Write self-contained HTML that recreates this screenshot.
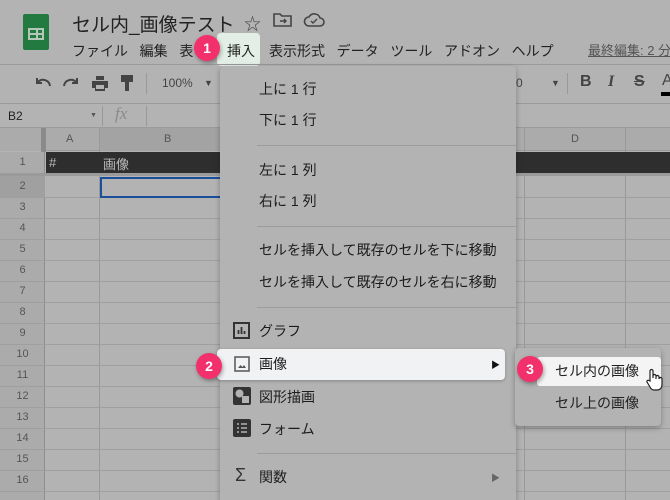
<!DOCTYPE html>
<html><head><meta charset="utf-8"><style>
*{margin:0;padding:0;box-sizing:border-box}
html,body{width:670px;height:500px;overflow:hidden}
body{background:#b3b3b3;font-family:"Liberation Sans","Noto Sans CJK JP",sans-serif;position:relative;color:#1a1a1a}
.a{position:absolute;white-space:nowrap}
.hl{border-top:1px solid #9a9a9a}
.badge{position:absolute;width:26px;height:26px;border-radius:50%;background:#f2306b;color:#fff;font-weight:bold;font-size:14px;text-align:center;line-height:26px;box-shadow:1px 2px 4px rgba(0,0,0,.35)}
.mi{position:absolute;left:259px;font-size:14px;color:#1c1c1c}
.sep{position:absolute;left:257px;width:259px;height:1px;background:#9c9c9c}
.rn{position:absolute;left:0;width:45px;text-align:center;font-size:11px;color:#555}
</style></head><body>
<div class="a" style="left:23px;top:14px;width:26px;height:36px;background:#237a40;border-radius:2px"></div>
<div class="a" style="left:28px;top:28px;width:16px;height:12px;border:2px solid #b5c7b8;background:linear-gradient(#b5c7b8,#b5c7b8) 6px 0/2px 100% no-repeat,linear-gradient(#b5c7b8,#b5c7b8) 0 3px/100% 2px no-repeat"></div>
<div class="a" style="left:72px;top:10px;font-size:19px;color:#222">セル内_画像テスト</div>
<div class="a" style="left:244px;top:10px;font-size:17px;color:#444">☆</div>
<svg class="a" style="left:273px;top:12px" width="20" height="16" viewBox="0 0 20 16"><path d="M1 2h6l2 2h9v10H1z" fill="none" stroke="#444" stroke-width="1.6"/><path d="M7 9h6M11 7l2 2-2 2" fill="none" stroke="#444" stroke-width="1.4"/></svg>
<svg class="a" style="left:303px;top:12px" width="22" height="16" viewBox="0 0 22 16"><path d="M6 14h11a4 4 0 0 0 0-8 6 6 0 0 0-11-1 4.5 4.5 0 0 0 0 9z" fill="none" stroke="#444" stroke-width="1.6"/><path d="M8 9l2 2 4-4" fill="none" stroke="#444" stroke-width="1.4"/></svg>
<div class="a" style="left:72px;top:41px;font-size:14px;color:#222">ファイル&nbsp;&nbsp;&nbsp;編集&nbsp;&nbsp;&nbsp;表</div>
<div class="a" style="left:217px;top:33px;width:43px;height:33px;background:#e3efe6;border-radius:4px"></div>
<div class="a" style="left:227px;top:41px;font-size:14px;color:#222">挿入</div>
<div class="a" style="left:269px;top:41px;font-size:14px;color:#222">表示形式&nbsp;&nbsp;&nbsp;データ&nbsp;&nbsp;&nbsp;ツール&nbsp;&nbsp;&nbsp;アドオン&nbsp;&nbsp;&nbsp;ヘルプ</div>
<div class="a" style="left:588px;top:40px;font-size:13px;color:#555;text-decoration:underline">最終編集: 2 分</div>
<div class="a hl" style="left:0;top:64px;width:670px"></div>
<svg class="a" style="left:34px;top:76px" width="18" height="12" viewBox="0 0 18 12"><path d="M16 10a7 7 0 0 0-12-4M3 2v5h5" fill="none" stroke="#444" stroke-width="2"/></svg>
<svg class="a" style="left:62px;top:76px" width="18" height="12" viewBox="0 0 18 12"><path d="M2 10a7 7 0 0 1 12-4M15 2v5h-5" fill="none" stroke="#444" stroke-width="2"/></svg>
<svg class="a" style="left:91px;top:74px" width="18" height="18" viewBox="0 0 18 18"><path d="M5 2h8v4H5z M1 7h16v7h-3v3H4v-3H1z" fill="#444"/><rect x="5" y="11" width="8" height="4" fill="#b3b3b3"/></svg>
<div class="a" style="left:121px;top:75px;width:12px;height:7px;background:#444"></div>
<div class="a" style="left:125px;top:82px;width:4px;height:9px;background:#444"></div>
<div class="a" style="left:146px;top:73px;height:21px;border-left:1px solid #999"></div>
<div class="a" style="left:162px;top:76px;font-size:12px;color:#444">100%</div>
<div class="a" style="left:204px;top:78px;font-size:9px;color:#444">▼</div>
<div class="a" style="left:516px;top:76px;font-size:12px;color:#444">0</div>
<div class="a" style="left:551px;top:78px;font-size:9px;color:#444">▼</div>
<div class="a" style="left:567px;top:73px;height:21px;border-left:1px solid #999"></div>
<div class="a" style="left:580px;top:73px;font-size:16px;font-weight:bold;color:#444">B</div>
<div class="a" style="left:608px;top:73px;font-size:16px;font-style:italic;font-family:'Liberation Serif',serif;font-weight:bold;color:#444">I</div>
<div class="a" style="left:634px;top:73px;font-size:16px;font-weight:bold;color:#444;text-decoration:line-through">S</div>
<div class="a" style="left:662px;top:72px;font-size:16px;color:#444">A</div>
<div class="a" style="left:661px;top:92px;width:9px;height:4px;background:#000"></div>
<div class="a hl" style="left:0;top:103px;width:670px"></div>
<div class="a" style="left:8px;top:109px;font-size:12px;color:#222">B2</div>
<div class="a" style="left:90px;top:112px;font-size:7px;color:#555">▼</div>
<div class="a" style="left:102px;top:106px;height:20px;border-left:1px solid #999"></div>
<div class="a" style="left:115px;top:104px;font-size:17px;font-style:italic;font-family:'Liberation Serif',serif;color:#8a8a8a">fx</div>
<div class="a" style="left:146px;top:106px;height:20px;border-left:1px solid #999"></div>
<div class="a hl" style="left:0;top:127px;width:670px"></div>
<div class="a" style="left:0;top:128px;width:670px;height:23px;background:#ababab;border-bottom:1px solid #999"></div>
<div class="a" style="left:41px;top:128px;width:5px;height:24px;background:#8a8a8a"></div>
<div class="a" style="left:0;top:128px;width:41px;height:23px;background:#ababab"></div>
<div class="a" style="left:100px;top:128px;width:120px;height:23px;background:#a3a3a3"></div>
<div class="a" style="left:66px;top:133px;font-size:11px;color:#555">A</div>
<div class="a" style="left:164px;top:133px;font-size:11px;color:#555">B</div>
<div class="a" style="left:571px;top:133px;font-size:11px;color:#555">D</div>
<div class="a" style="left:99px;top:128px;height:372px;border-left:1px solid #999"></div>
<div class="a" style="left:524px;top:128px;height:372px;border-left:1px solid #999"></div>
<div class="a" style="left:625px;top:128px;height:372px;border-left:1px solid #999"></div>
<div class="a" style="left:0;top:152px;width:45px;height:348px;background:#ababab;border-right:1px solid #8e8e8e"></div>
<div class="a" style="left:46px;top:152px;width:624px;height:21px;background:#2e2e2e"></div>
<div class="a" style="left:49px;top:155px;font-size:13px;color:#bbb">#</div>
<div class="a" style="left:103px;top:154px;font-size:13px;color:#bbb">画像</div>
<div class="a" style="left:0;top:173px;width:670px;height:3px;background:#9a9a9a"></div>
<div class="a" style="left:0;top:176px;width:45px;height:21px;background:#a0a0a0"></div>
<div class="rn" style="top:156px">1</div>
<div class="rn" style="top:180px">2</div>
<div class="rn" style="top:201px">3</div><div class="rn" style="top:222px">4</div><div class="rn" style="top:243px">5</div><div class="rn" style="top:264px">6</div><div class="rn" style="top:285px">7</div><div class="rn" style="top:306px">8</div><div class="rn" style="top:327px">9</div><div class="rn" style="top:348px">10</div><div class="rn" style="top:369px">11</div><div class="rn" style="top:390px">12</div><div class="rn" style="top:411px">13</div><div class="rn" style="top:432px">14</div><div class="rn" style="top:453px">15</div><div class="rn" style="top:474px">16</div>
<div class="a" style="left:0;top:197px;width:670px;height:304px;background:repeating-linear-gradient(#9f9f9f 0 1px,transparent 1px 21px)"></div>
<div class="a" style="left:100px;top:177px;width:125px;height:21px;border:2px solid #1b4f9c"></div>
<div class="a" style="left:220px;top:66px;width:296px;height:440px;background:#b3b3b3;box-shadow:0 2px 6px rgba(0,0,0,.3);border-radius:4px"></div>
<div class="mi" style="top:79px">上に 1 行</div>
<div class="mi" style="top:110px">下に 1 行</div>
<div class="sep" style="top:145px"></div>
<div class="mi" style="top:160px">左に 1 列</div>
<div class="mi" style="top:191px">右に 1 列</div>
<div class="sep" style="top:226px"></div>
<div class="mi" style="top:240px">セルを挿入して既存のセルを下に移動</div>
<div class="mi" style="top:272px">セルを挿入して既存のセルを右に移動</div>
<div class="sep" style="top:307px"></div>
<svg class="a" style="left:233px;top:322px" width="17" height="17" viewBox="0 0 17 17"><rect x="1" y="1" width="15" height="15" fill="none" stroke="#333" stroke-width="2"/><path d="M5.5 12V8M8.5 12V5M11.5 12V9" stroke="#333" stroke-width="1.8"/></svg>
<div class="mi" style="top:321px">グラフ</div>
<div class="a" style="left:217px;top:349px;width:288px;height:31px;background:#f1f2f4;border-radius:4px;box-shadow:0 1px 3px rgba(0,0,0,.25)"></div>
<svg class="a" style="left:234px;top:356px" width="16" height="16" viewBox="0 0 16 16"><rect x="1" y="1" width="14" height="14" fill="none" stroke="#555" stroke-width="1.5"/><path d="M4 12l2.5-3 2 2 1.5-2 2 3z" fill="#555"/></svg>
<div class="mi" style="top:354px">画像</div>
<div class="a" style="left:491px;top:358px;font-size:9px;color:#111">▶</div>
<svg class="a" style="left:233px;top:387px" width="18" height="18" viewBox="0 0 18 18"><rect width="18" height="18" rx="2" fill="#333"/><circle cx="6.5" cy="6.5" r="4" fill="#b3b3b3"/><rect x="9" y="9" width="7" height="7" fill="#b3b3b3"/></svg>
<div class="mi" style="top:387px">図形描画</div>
<svg class="a" style="left:233px;top:419px" width="18" height="18" viewBox="0 0 18 18"><rect width="18" height="18" rx="2" fill="#333"/><path d="M4 5h2M8 5h6M4 9h2M8 9h6M4 13h2M8 13h6" stroke="#b3b3b3" stroke-width="1.6"/></svg>
<div class="mi" style="top:419px">フォーム</div>
<div class="sep" style="top:453px"></div>
<div class="a" style="left:235px;top:465px;font-size:18px;color:#333">Σ</div>
<div class="mi" style="top:467px">関数</div>
<div class="a" style="left:491px;top:471px;font-size:9px;color:#666">▶</div>
<div class="a" style="left:515px;top:348px;width:146px;height:78px;background:#b3b3b3;border-radius:4px;box-shadow:0 2px 6px rgba(0,0,0,.3)"></div>
<div class="a" style="left:537px;top:357px;width:124px;height:29px;background:#f4f4f4;border-radius:3px"></div>
<div class="a" style="left:555px;top:361px;font-size:14px;color:#222">セル内の画像</div>
<div class="a" style="left:555px;top:393px;font-size:14px;color:#222">セル上の画像</div>
<svg class="a" style="left:645px;top:368px" width="18" height="24" viewBox="0 0 18 24"><path d="M5 13V3a1.5 1.5 0 0 1 3 0v7V8a1.5 1.5 0 0 1 3 0v3-2a1.5 1.5 0 0 1 3 0v2a1.5 1.5 0 0 1 3 0v5c0 4-2 6-5 6H9c-2 0-3-1-4-3l-3-5a1.3 1.3 0 0 1 2-1.5z" fill="#fff" stroke="#222" stroke-width="1.2"/></svg>
<div class="badge" style="left:194px;top:35px">1</div>
<div class="badge" style="left:196px;top:353px">2</div>
<div class="badge" style="left:517px;top:356px">3</div>
</body></html>
